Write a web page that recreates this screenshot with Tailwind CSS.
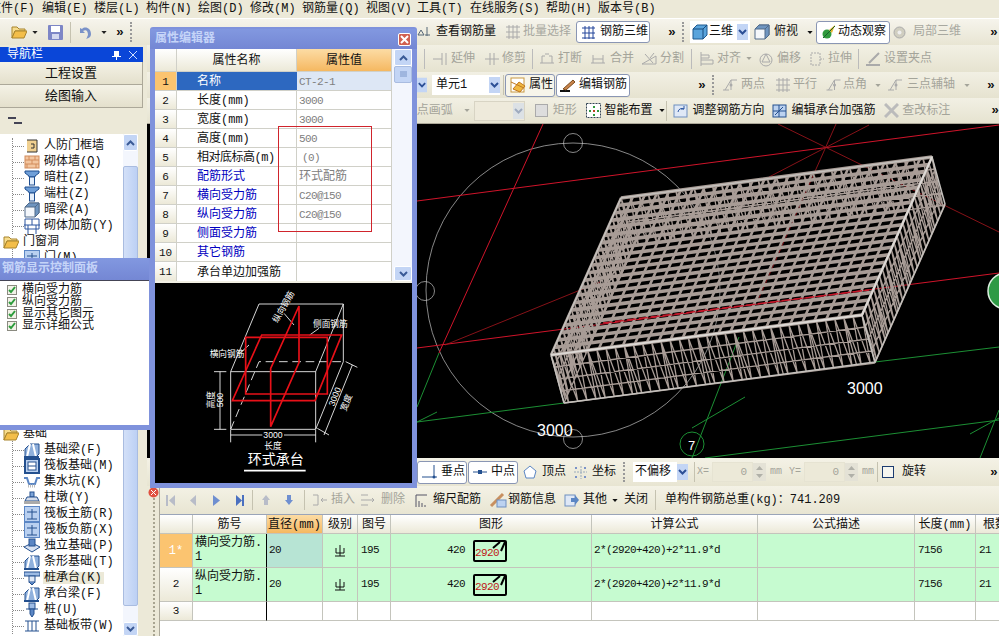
<!DOCTYPE html>
<html lang="zh">
<head>
<meta charset="UTF-8" />
<title>钢筋三维</title>
<script src="https://cdn.jsdelivr.net/npm/@tailwindcss/browser@4"></script>
</head>
<body class="bg-[#ece9d8]">

<svg class="absolute w-0 h-0">
  <symbol id="arr" viewBox="0 0 7 4"><path d="M0 0h7L3.500 4z" fill="currentColor"/></symbol>
  <symbol id="sel" viewBox="0 0 11 16"><rect width="11" height="16" fill="#c3d5f5"/><path d="M2 6l3.500 3.500L9 6" fill="none" stroke="#2c4f96" stroke-width="2"/></symbol>
  <symbol id="col" viewBox="0 0 16 16"><path d="M1 1h14v2l-4 3v1H5V6L1 3z" fill="#6f9fd8" stroke="#1f4e90"/><rect x="5.500" y="7" width="5" height="8" fill="#e4eefa" stroke="#1f4e90"/></symbol>
  <symbol id="bm" viewBox="0 0 16 16"><path d="M1 15V7l5-5h9v10l-3 3z" fill="#8fb0dc" stroke="#24508f"/><path d="M6 2L3 15M9 2l3 13" stroke="#fff" stroke-width="2"/><path d="M0 15h15" stroke="#24508f" stroke-width="2"/></symbol>
  <symbol id="sq" viewBox="0 0 16 16"><rect x=".5" y=".5" width="15" height="15" fill="#b9d0f0" stroke="#5b86c4"/><path d="M8 3v10M3 6h10M3 13h10" stroke="#25508f" fill="none"/></symbol>
  <symbol id="fold" viewBox="0 0 16 14"><path d="M1 2h5l2 2h6v2H4L1 13z" fill="#f7dc8c" stroke="#a8842c"/><path d="M4 6h12l-3 7H1z" fill="#f3be4a" stroke="#a8842c"/></symbol>
  <symbol id="cube" viewBox="0 0 16 16"><path d="M1 5l4-4h10v10l-4 4H1z" fill="#5aa4dc" stroke="#1f5a90"/><path d="M1 5h10v10M11 5l4-4" fill="none" stroke="#174a7c"/></symbol>
  <symbol id="cube2" viewBox="0 0 16 16"><path d="M1 5l4-4h10v10l-4 4H1z" fill="#f4f7fb" stroke="#506a8a"/><path d="M1 5l4-4h10l-4 4zM11 5l4-4v10l-4 4z" fill="#6f95c0" stroke="#506a8a"/></symbol>
  <symbol id="gr" viewBox="0 0 16 16"><path d="M1 3h14M1 8h14M1 13h14M4 1v14M8 1v14M12 1v14" stroke="#aaa" fill="none"/></symbol>
  <symbol id="ln" viewBox="0 0 16 16"><path d="M1 13h6M9 3l-6 10M9 3h6M9 3v10" stroke="#aaa" fill="none"/><circle cx="9" cy="8" r="1.500" fill="#aaa"/></symbol>
</svg>

<div class="w-[999px] h-[636px] overflow-hidden relative flex flex-col text-[12px] leading-none text-[#111] font-['Liberation_Mono','Noto_Sans_CJK_SC',monospace]">

  <!-- menu -->
  <div class="h-[18px] flex items-center bg-[#ece9d8] whitespace-nowrap">
    <span class="w-[42px] -ml-[11px] pl-0">文件(F)</span>
    <span class="w-[63px] ml-[11px]">编辑(E)</span>
    <span class="w-[52px] -ml-[11px]">楼层(L)</span>
    <span class="w-[52px]">构件(N)</span>
    <span class="w-[52px]">绘图(D)</span>
    <span class="w-[52px]">修改(M)</span>
    <span class="w-[64px]">钢筋量(Q)</span>
    <span class="w-[51px]">视图(V)</span>
    <span class="w-[53px]">工具(T)</span>
    <span class="w-[76px]">在线服务(S)</span>
    <span class="w-[52px]">帮助(H)</span>
    <span>版本号(B)</span>
  </div>

  <!-- first toolbar, full width -->
  <div class="h-[27px] flex items-center whitespace-nowrap bg-linear-to-b from-[#f6f4ec] to-[#e8e5d3] border-t border-[#fff]">
    <span class="w-[11px]"></span>
    <span class="w-[37px] flex items-center gap-[5px]"><svg class="w-4 h-[14px]"><use href="#fold"/></svg><svg class="w-[6px] h-[3px] text-[#222]"><use href="#arr"/></svg></span>
    <span class="w-[22px]"><svg class="w-[15px] h-[15px]" viewBox="0 0 15 15"><rect width="15" height="15" rx="1" fill="#7d86c6"/><rect x="3" y="1" width="9" height="6" fill="#fff"/><rect x="4" y="9" width="7" height="5" fill="#d4d8ee"/></svg></span>
    <span class="w-[8px] h-[21px] border-l border-[#c5c2b0]"></span>
    <span class="w-[38px] flex items-center gap-[10px]"><svg class="w-[13px] h-[13px]" viewBox="0 0 13 13"><path d="M2 2v5h5L5 5c3-2 5 0 5 4-1 2-1 3-2 4 4-1 5-3 5-5 0-6-6-8-9-5z" fill="#7a92c8"/></svg><svg class="w-[6px] h-[3px] text-[#222]"><use href="#arr"/></svg></span>
    <span class="w-[14px] font-bold text-[13px]">»</span>
    <span class="w-[10px] h-[20px] border-l-2 border-dotted border-[#999]"></span>
    <span class="w-[277px]"></span>
    <span class="w-[88px] flex items-center gap-[3px]"><svg class="w-4 h-4" viewBox="0 0 16 16"><path d="M1 11l3-5 3 5zM10 3v9M8 11h5" stroke="#567" fill="none"/></svg>查看钢筋量</span>
    <span class="w-[71px] flex items-center gap-[2px] text-[#a8a8a0]"><svg class="w-4 h-4"><use href="#gr"/></svg>批量选择</span>
    <span class="w-[74px] h-[22px] flex items-center gap-[4px] pl-[4px] rounded-[3px] border border-[#8a96b4] bg-white"><svg class="w-[15px] h-[15px]" viewBox="0 0 15 15"><path d="M1 3h13M1 8h13M1 13h13M4 1v13M8 1v13M12 1v13" stroke="#23459a" fill="none"/></svg>钢筋三维</span>
    <span class="w-[18px]"></span>
    <span class="w-[14px] font-bold text-[13px]">»</span>
    <span class="w-[8px] h-[20px] border-l-2 border-dotted border-[#999]"></span>
    <span class="w-[60px] h-[22px] flex items-center bg-white pl-[2px]"><svg class="w-4 h-4 shrink-0"><use href="#cube"/></svg><span class="ml-[1px] w-[28px]">三维</span><svg class="w-[11px] h-4"><use href="#sel"/></svg></span>
    <span class="w-[66px] ml-[4px] -mr-[4px] flex items-center gap-[4px]"><svg class="w-4 h-4"><use href="#cube2"/></svg>俯视<svg class="w-[6px] h-[3px] ml-[5px]"><use href="#arr"/></svg></span>
    <span class="w-[74px] h-[23px] flex items-center gap-[1px] pl-[4px] rounded-[3px] border border-[#8a96b4] bg-white"><svg class="w-4 h-4 shrink-0" viewBox="0 0 16 16"><circle cx="6" cy="10" r="4.500" fill="#2f9a3c"/><path d="M8 6l6-5-3 8z" fill="#e4b22c"/><path d="M2 14L14 2" stroke="#16602a"/></svg>动态观察</span>
    <span class="w-[97px] ml-[3px] flex items-center gap-[7px] text-[#a8a8a0]"><svg class="w-[13px] h-[13px]" viewBox="0 0 13 13"><circle cx="6.500" cy="6.500" r="5.500" fill="#d0cec0" stroke="#aaa"/><circle cx="6.500" cy="6.500" r="2" fill="#eee"/></svg>局部三维</span>
    <span class="font-bold text-[13px]">»</span>
  </div>

  <div class="flex-1 flex min-h-0">
    <!-- navigation -->
    <div class="w-[147px] shrink-0 flex flex-col pt-[2px]">
      <div class="w-[143px] h-[15px] bg-[#0a46d8] text-white flex items-center whitespace-nowrap overflow-hidden">
        <span class="pl-[7px] w-[112px]">导航栏</span>
        <svg class="w-[9px] h-[10px]" viewBox="0 0 9 10"><path d="M2 1h5v5h2v1H5v3H4V7H0V6h2z" fill="#fff"/></svg>
        <svg class="ml-[8px] w-[8px] h-[8px]" viewBox="0 0 8 8"><path d="M0 0l8 8M8 0L0 8" stroke="#cfe0ff"/></svg>
      </div>
      <div class="w-[143px] h-[23px] flex items-center justify-center text-[13px] border-b border-[#aca899] border-r bg-linear-to-b from-[#f4f2e6] to-[#e4e0cc]">工程设置</div>
      <div class="w-[143px] h-[23px] flex items-center justify-center text-[13px] border-b border-[#aca899] border-r bg-linear-to-b from-[#f4f2e6] to-[#e4e0cc]">绘图输入</div>
      <div class="w-[143px] h-[26px] flex items-center pl-[8px] bg-[#ece9d8]"><svg class="w-[16px] h-[8px]" viewBox="0 0 16 8"><path d="M0 1h8M6 6h8" stroke="#445" stroke-width="2"/></svg></div>
      <div class="flex-1 flex min-h-0">
        <div class="w-[123px] bg-white pt-[4px] overflow-hidden whitespace-nowrap">
          <div class="ml-[12px] border-l border-dotted border-[#888]">
            <div class="flex items-center h-4"><i class="w-[11px] border-t border-dotted border-[#888]"></i><svg class="w-4 h-4" viewBox="0 0 16 16"><path d="M3 2h10v12H3M7 6h3v4H7" fill="#f0d090" stroke="#333"/></svg><span class="ml-[4px]">人防门框墙</span></div>
            <div class="flex items-center h-4"><i class="w-[11px] border-t border-dotted border-[#888]"></i><svg class="w-4 h-4" viewBox="0 0 16 16"><rect x="1" y="2" width="14" height="12" fill="#f3c6a0" stroke="#d28c5c"/><path d="M1 6h14M1 10h14M5 2v4M11 2v4M8 6v4M3 10v4M12 10v4" stroke="#d28c5c"/></svg><span class="ml-[4px]">砌体墙(Q)</span></div>
            <div class="flex items-center h-4"><i class="w-[11px] border-t border-dotted border-[#888]"></i><svg class="w-4 h-4"><use href="#col"/></svg><span class="ml-[4px]">暗柱(Z)</span></div>
            <div class="flex items-center h-4"><i class="w-[11px] border-t border-dotted border-[#888]"></i><svg class="w-4 h-4"><use href="#col"/></svg><span class="ml-[4px]">端柱(Z)</span></div>
            <div class="flex items-center h-4"><i class="w-[11px] border-t border-dotted border-[#888]"></i><svg class="w-4 h-4"><use href="#cube2"/></svg><span class="ml-[4px]">暗梁(A)</span></div>
            <div class="flex items-center h-4"><i class="w-[11px] border-t border-dotted border-[#888]"></i><svg class="w-4 h-4" viewBox="0 0 16 16"><path d="M1 1h14v10H1zM0 7h16M4 7v9M12 7v9M8 1v6" fill="none" stroke="#2c56a0"/></svg><span class="ml-[4px]">砌体加筋(Y)</span></div>
            <div class="flex items-center h-4 -ml-[10px]"><svg class="w-4 h-[14px] bg-white"><use href="#fold"/></svg><span class="ml-[4px]">门窗洞</span></div>
            <div class="flex items-center h-4"><i class="w-[11px] border-t border-dotted border-[#888]"></i><svg class="w-4 h-4"><use href="#sq"/></svg><span class="ml-[4px]">门(M)</span></div>
            <div class="h-[160px]"></div>
            <div class="flex items-center h-4 -ml-[10px]"><svg class="w-4 h-[14px] bg-white"><use href="#fold"/></svg><span class="ml-[4px]">基础</span></div>
            <div class="flex items-center h-4"><i class="w-[11px] border-t border-dotted border-[#888]"></i><svg class="w-4 h-4"><use href="#bm"/></svg><span class="ml-[4px]">基础梁(F)</span></div>
            <div class="flex items-center h-4"><i class="w-[11px] border-t border-dotted border-[#888]"></i><svg class="w-4 h-4" viewBox="0 0 16 16"><rect x="1" y="1" width="14" height="14" fill="#bcd2f0" stroke="#24508f" stroke-width="2"/><rect x="4" y="4" width="8" height="8" fill="#fff" stroke="#24508f"/><path d="M4 8h8" stroke="#24508f"/></svg><span class="ml-[4px]">筏板基础(M)</span></div>
            <div class="flex items-center h-4"><i class="w-[11px] border-t border-dotted border-[#888]"></i><svg class="w-4 h-4" viewBox="0 0 16 16"><path d="M0 4h3l2 6h6l2-6h3" fill="none" stroke="#5b86c4" stroke-width="2"/><path d="M4 12h8" stroke="#bbb" stroke-width="3" stroke-dasharray="1 1"/></svg><span class="ml-[4px]">集水坑(K)</span></div>
            <div class="flex items-center h-4"><i class="w-[11px] border-t border-dotted border-[#888]"></i><svg class="w-4 h-4" viewBox="0 0 16 16"><rect x="6" y="2" width="4" height="5" fill="#7da4d8" stroke="#24508f"/><path d="M3 7h10l2 4H1z" fill="#d4dcea" stroke="#24508f"/><rect x="0" y="11" width="16" height="3" fill="#aaa"/></svg><span class="ml-[4px]">柱墩(Y)</span></div>
            <div class="flex items-center h-4"><i class="w-[11px] border-t border-dotted border-[#888]"></i><svg class="w-4 h-4"><use href="#sq"/></svg><span class="ml-[4px]">筏板主筋(R)</span></div>
            <div class="flex items-center h-4"><i class="w-[11px] border-t border-dotted border-[#888]"></i><svg class="w-4 h-4"><use href="#sq"/></svg><span class="ml-[4px]">筏板负筋(X)</span></div>
            <div class="flex items-center h-4"><i class="w-[11px] border-t border-dotted border-[#888]"></i><svg class="w-4 h-4" viewBox="0 0 16 16"><path d="M0 9l8-4 8 4-8 5z" fill="#d8e2f2" stroke="#24508f"/><rect x="5" y="1" width="6" height="7" fill="#5b86c4" stroke="#24508f"/></svg><span class="ml-[4px]">独立基础(P)</span></div>
            <div class="flex items-center h-4"><i class="w-[11px] border-t border-dotted border-[#888]"></i><svg class="w-4 h-4"><use href="#bm"/></svg><span class="ml-[4px]">条形基础(T)</span></div>
            <div class="flex items-center h-4"><i class="w-[11px] border-t border-dotted border-[#888]"></i><svg class="w-4 h-4" viewBox="0 0 16 16"><rect x="0" y="2" width="16" height="4" fill="#9dbbe4" stroke="#24508f"/><rect x="5" y="6" width="6" height="6" fill="#dfe8f6" stroke="#24508f"/><path d="M5 12l3 3 3-3" fill="#5b86c4" stroke="#24508f"/></svg><span class="ml-[3px] px-[1px] bg-[#ece9d8] w-[61px]">桩承台(K)</span></div>
            <div class="flex items-center h-4"><i class="w-[11px] border-t border-dotted border-[#888]"></i><svg class="w-4 h-4"><use href="#bm"/></svg><span class="ml-[4px]">承台梁(F)</span></div>
            <div class="flex items-center h-4"><i class="w-[11px] border-t border-dotted border-[#888]"></i><svg class="w-4 h-4" viewBox="0 0 16 16"><rect x="5" y="1" width="6" height="6" fill="#9dbbe4" stroke="#24508f"/><path d="M2 7h12M6 7v5l2 3 2-3V7" fill="#5b86c4" stroke="#24508f"/></svg><span class="ml-[4px]">桩(U)</span></div>
            <div class="flex items-center h-4"><i class="w-[11px] border-t border-dotted border-[#888]"></i><svg class="w-4 h-4" viewBox="0 0 16 16"><path d="M1 3h14M4 3v10M8 3v10M12 3v10M1 13h14" stroke="#24508f" fill="none"/></svg><span class="ml-[4px]">基础板带(W)</span></div>
          </div>
        </div>
        <!-- tree scrollbar -->
        <div class="w-[15px] bg-[#f3f6fd] flex flex-col">
          <div class="h-[17px] bg-[#c3d5f5] flex items-center justify-center rounded-[2px] border border-white"><svg class="w-[9px] h-[6px]" viewBox="0 0 9 6"><path d="M1 5l3.500-3.500L8 5" fill="none" stroke="#3a5a96" stroke-width="2"/></svg></div>
          <div class="h-[440px] mt-[15px] bg-linear-to-r from-[#d3e0f8] to-[#bcd0f4] rounded-[2px] border border-[#a9bce0]"></div>
          <div class="flex-1"></div>
          <div class="h-[14px] bg-[#c3d5f5] flex items-center justify-center rounded-[2px] border border-white"><svg class="w-[9px] h-[6px]" viewBox="0 0 9 6"><path d="M1 1l3.500 3.500L8 1" fill="none" stroke="#3a5a96" stroke-width="2"/></svg></div>
        </div>
        <div class="w-[9px]"></div>
      </div>
    </div>

    <!-- right column -->
    <div class="flex-1 min-w-0 flex flex-col whitespace-nowrap">
      <!-- row 2 -->
      <div class="h-[27px] flex items-center text-[#a4a49a] bg-linear-to-b from-[#f2f0e4] to-[#e6e3d0]">
        <span class="w-[277px]"></span>
        <span class="w-[8px] h-[20px] border-l border-[#bbb]"></span>
        <span class="w-[52px] flex items-center gap-[3px]"><svg class="w-4 h-4" viewBox="0 0 16 16"><path d="M1 8h9M10 2v12M14 2v12" stroke="#aaa" fill="none"/></svg>延伸</span>
        <span class="w-[48px] flex items-center gap-[2px]"><svg class="w-4 h-4" viewBox="0 0 16 16"><path d="M1 8h14M6 2v12M10 2v12" stroke="#aaa" fill="none"/></svg>修剪</span>
        <span class="w-[7px] h-[20px] border-l border-[#bbb]"></span>
        <span class="w-[51px] flex items-center gap-[3px]"><svg class="w-4 h-4" viewBox="0 0 16 16"><path d="M1 12h14M3 12V5h3M13 12V5h-3M6 3h4" stroke="#aaa" fill="none"/></svg>打断</span>
        <span class="w-[51px] flex items-center gap-[4px]"><svg class="w-4 h-4" viewBox="0 0 16 16"><path d="M1 12h14M3 12V4M13 12V4M3 8h10" stroke="#aaa" fill="none"/></svg>合并</span>
        <span class="w-[50px] flex items-center gap-[3px]"><svg class="w-4 h-4" viewBox="0 0 16 16"><path d="M1 13h14V5zM4 3l8 9M13 2l-4 5" stroke="#aaa" fill="none"/></svg>分割</span>
        <span class="w-[9px] h-[20px] border-l border-[#bbb]"></span>
        <span class="w-[58px] flex items-center gap-[3px]"><svg class="w-[14px] h-4" viewBox="0 0 14 16"><path d="M1 1v14M1 4h8v3H1M1 9h12v4H1" stroke="#aaa" fill="none"/></svg>对齐<svg class="w-[6px] h-[3px] ml-[2px]"><use href="#arr"/></svg></span>
        <span class="w-[51px] flex items-center gap-[3px]"><svg class="w-4 h-4" viewBox="0 0 16 16"><circle cx="8" cy="9" r="6" fill="none" stroke="#aaa"/><path d="M8 3l4 8H4z" fill="none" stroke="#aaa"/></svg>偏移</span>
        <span class="w-[49px] flex items-center gap-[3px]"><svg class="w-4 h-4" viewBox="0 0 16 16"><path d="M2 2h9v12H2zM11 8h4" fill="none" stroke="#aaa" stroke-dasharray="2 1"/></svg>拉伸</span>
        <span class="w-[7px] h-[20px] border-l border-[#bbb]"></span>
        <span class="w-[73px] flex items-center gap-[3px]"><svg class="w-4 h-4" viewBox="0 0 16 16"><path d="M1 14h14M4 12L14 2" stroke="#aaa" stroke-width="2" fill="none"/></svg>设置夹点</span>
      </div>
      <!-- row 3 -->
      <div class="h-[26px] flex items-center bg-linear-to-b from-[#f2f0e4] to-[#e6e3d0]">
        <span class="w-[270px]"></span>
        <svg class="w-[10px] h-4"><use href="#sel"/></svg>
        <span class="w-[5px]"></span>
        <span class="w-[68px] h-[20px] flex items-center justify-between bg-white pl-[4px]">单元1<svg class="w-[11px] h-4"><use href="#sel"/></svg></span>
        <span class="w-[5px] h-[20px] border-l border-[#c5c2b0] ml-[3px] -mr-[3px]"></span>
        <span class="w-[50px] h-[23px] flex items-center gap-[3px] pl-[4px] rounded-[3px] border border-[#8a96b4] bg-[#f7f5ea]"><svg class="w-4 h-4 shrink-0" viewBox="0 0 16 16"><rect x="1" y="1" width="13" height="14" fill="#fff" stroke="#c89840"/><path d="M1 5l13 6M3 12l6-7 6 4-5 6z" fill="#f0b840" stroke="#c07820"/></svg>属性</span>
        <span class="w-[74px] h-[23px] flex items-center gap-[3px] pl-[3px] rounded-[3px] border border-[#8a96b4] bg-white ml-[1px]"><svg class="w-4 h-4 shrink-0" viewBox="0 0 16 16"><path d="M0 14h10" stroke="#111" stroke-width="2"/><path d="M3 12L13 3l2 2-9 8z" fill="#c8844c" stroke="#7c4c1c"/></svg>编辑钢筋</span>
        <span class="w-[68px]"></span>
        <span class="w-[14px] font-bold text-[13px]">»</span>
        <span class="w-[10px] h-[20px] border-l-2 border-dotted border-[#999]"></span>
        <span class="w-[53px] flex items-center gap-[3px] text-[#a4a49a]"><svg class="w-4 h-4"><use href="#ln"/></svg>两点</span>
        <span class="w-[50px] flex items-center gap-[2px] text-[#a4a49a]"><svg class="w-4 h-4"><use href="#gr"/></svg>平行</span>
        <span class="w-[62px] flex items-center gap-[1px] text-[#a4a49a]"><svg class="w-[17px] h-4"><use href="#ln"/></svg>点角<svg class="w-[6px] h-[3px] ml-[7px]"><use href="#arr"/></svg></span>
        <span class="w-[100px] flex items-center gap-[4px] text-[#a4a49a]"><svg class="w-4 h-4"><use href="#ln"/></svg>三点辅轴<svg class="w-[6px] h-[3px] ml-[5px]"><use href="#arr"/></svg></span>
        <span class="font-bold text-[13px]">»</span>
      </div>
      <!-- row 4 -->
      <div class="h-[26px] flex items-center border-b border-[#aca899] bg-linear-to-b from-[#f2f0e4] to-[#e6e3d0]">
        <span class="w-[270px]"></span>
        <span class="w-[57px] flex items-center text-[#a4a49a]"><span class="w-[37px]">点画弧</span><svg class="w-[6px] h-[3px] ml-[10px]"><use href="#arr"/></svg></span>
        <span class="w-[51px] h-[20px] bg-[#eeeadb] border border-[#d8d4c4] flex justify-end"><svg class="w-[11px] h-[18px] opacity-40"><use href="#sel"/></svg></span>
        <span class="w-[10px]"></span>
        <span class="w-[51px] flex items-center gap-[5px] text-[#a4a49a]"><svg class="w-[13px] h-[13px]" viewBox="0 0 13 13"><rect x=".5" y=".5" width="12" height="12" fill="#ddd" stroke="#aaa"/></svg>矩形</span>
        <span class="w-[80px] flex items-center gap-[4px]"><svg class="w-[15px] h-[15px] shrink-0" viewBox="0 0 15 15"><rect x=".5" y=".5" width="14" height="14" fill="#fff" stroke="#345" stroke-dasharray="2 1"/><path d="M7 3h2v2H7zM3 7h2v2H3zM11 7h2v2h-2zM7 11h2v2H7z" fill="#2f9a3c"/><path d="M7 7h2v2H7z" fill="#c04020"/></svg>智能布置<svg class="w-[6px] h-[3px] ml-[2px]"><use href="#arr"/></svg></span>
        <span class="w-[7px] h-[20px] border-l border-[#c5c2b0]"></span>
        <span class="w-[100px] flex items-center gap-[5px]"><svg class="w-[15px] h-[15px]" viewBox="0 0 15 15"><rect x="1" y="2" width="13" height="12" fill="#dfe8f6" stroke="#6f8fc0"/><path d="M5 9a4 4 0 0 1 6-3M11 3v3H8" fill="none" stroke="#2c56a0"/></svg>调整钢筋方向</span>
        <span class="w-[112px] flex items-center gap-[4px]"><svg class="w-[15px] h-[15px]" viewBox="0 0 15 15"><rect x="1" y="2" width="13" height="12" fill="#bcd2f0" stroke="#24508f"/><path d="M7 2v12M1 8h13M3 12l8-8" fill="none" stroke="#24508f"/></svg>编辑承台加强筋</span>
        <span class="w-[107px] flex items-center gap-[3px] text-[#a4a49a]"><svg class="w-[15px] h-[15px]" viewBox="0 0 15 15"><path d="M1 1l13 13M14 1L1 14" stroke="#bbb" stroke-width="3"/></svg>查改标注</span>
        <span class="font-bold text-[13px]">»</span>
      </div>

      <!-- 3D view -->
      <div class="h-[334px] bg-black overflow-hidden">
        <svg class="block" width="852" height="334" viewBox="147 124 852 334" fill="none">
          <g stroke="#c2c2c2" stroke-width=".7">
            <circle cx="573" cy="290" r="147"/><circle cx="573" cy="143" r="9.500"/><circle cx="425" cy="291" r="9.500"/><circle cx="573" cy="439" r="9.500"/>
          </g>
          <g stroke="#d0142a" stroke-width="1">
            <path d="M417 201L999 125M417 348L999 273M543 124L439 353"/>
          </g>
          <g stroke="#a8161e" stroke-width=".8">
            <path d="M445 345L600 282M769 177L869 125M778 124L999 232M836 124L758 300"/>
          </g>
          <g stroke="#1c8f34" stroke-width="1">
            <path d="M439 353L417 407M417 422L564 403M875 362L999 347M705 458L999 420M739 337L692 458M417 422L437 412M692 428L745 397M970 434L999 418M980 458L999 410"/>
            <circle cx="692" cy="444" r="12"/>
          </g>
          <path id="cageMesh" stroke="#a89c96" stroke-width="1.300"/>
          <path id="cageRows" stroke="#a89c96" stroke-width="3.600"/>
          <path id="cageCols" stroke="#a89c96" stroke-width="2.600"/>
          <path d="M551 355L621 198L932 157L862 315M564 403L875 362L945 204L932 157M551 355L564 403M875 362L862 315" stroke="#c4c0bc" stroke-width="1.500"/>
          <path d="M551 355L862 315L932 157" stroke="#dcd8d4" stroke-width="2"/>
          <path d="M603 323L869 290" stroke="#c4182a" stroke-width="1.500" stroke-dasharray="9 3"/>
          <g fill="#fff" font-family="Liberation Sans" font-size="16">
            <text x="847" y="394">3000</text>
            <text x="537" y="436">3000</text>
            <text x="688" y="450" font-size="13">7</text>
          </g>
          <circle cx="1006" cy="291" r="18" fill="#2e9a45" stroke="#dcefe0" stroke-width="1.500"/>
        </svg>
      </div>

      <!-- snap bar -->
      <div class="h-[28px] flex items-center bg-linear-to-b from-[#f4f2e6] to-[#e8e5d2]">
        <span class="w-[270px]"></span>
        <span class="w-[50px] h-[23px] flex items-center gap-[3px] pl-[4px] rounded-[3px] border border-[#8a96b4] bg-white"><svg class="w-4 h-4 shrink-0" viewBox="0 0 16 16"><path d="M0 13h15M12 1v12" stroke="#24508f"/><circle cx="12" cy="13" r="1.500" fill="#24508f"/></svg>垂点</span>
        <span class="w-[50px] h-[23px] flex items-center gap-[3px] pl-[3px] ml-[1px] rounded-[3px] border border-[#8a96b4] bg-white"><svg class="w-4 h-4 shrink-0" viewBox="0 0 16 16"><path d="M1 8h14" stroke="#24508f"/><rect x="6" y="6" width="4" height="4" fill="#24508f"/></svg>中点</span>
        <span class="w-[50px] ml-[5px] flex items-center gap-[5px]"><svg class="w-[14px] h-[14px] shrink-0" viewBox="0 0 14 14"><path d="M7 1l6 5-2 7H3L1 6z" fill="#fff" stroke="#5b86c4"/></svg>顶点</span>
        <span class="w-[50px] flex items-center gap-[4px]"><svg class="w-[15px] h-[15px] shrink-0" viewBox="0 0 15 15"><path d="M1 7h13M8 1v13" stroke="#9ab" stroke-dasharray="2 1"/><path d="M2 2h2v2H2zM11 2h2v2h-2zM2 11h2v2H2zM11 11h2v2h-2z" fill="#7a92c8"/></svg>坐标</span>
        <span class="w-[10px] h-[20px] border-l-2 border-dotted border-[#999]"></span>
        <span class="w-[44px] h-[20px] flex items-center bg-white pl-[2px]">不偏移</span>
        <svg class="w-[11px] h-4"><use href="#sel"/></svg>
        <span class="w-[6px]"></span>
        <span class="w-[3px] h-[20px] border-l border-[#c5c2b0]"></span>
        <span class="w-[15px] text-[#a4a49a] text-[10px]">X=</span>
        <span class="w-[41px] h-[20px] bg-[#ece9d8] border border-[#e6e3d2] text-[#a4a49a] flex items-center justify-end pr-[5px] text-[11px]">0</span>
        <svg class="w-[14px] h-[18px]" viewBox="0 0 14 18"><rect width="13" height="18" fill="#e4e2d6"/><path d="M3 7l3.500-4L10 7zM3 11l3.500 4L10 11z" fill="#b0b0a8"/></svg>
        <span class="w-[22px] text-[#a4a49a] text-[10px] pl-[3px]">mm</span>
        <span class="w-[15px] text-[#a4a49a] text-[10px]">Y=</span>
        <span class="w-[41px] h-[20px] bg-[#ece9d8] border border-[#e6e3d2] text-[#a4a49a] flex items-center justify-end pr-[5px] text-[11px]">0</span>
        <svg class="w-[14px] h-[18px]" viewBox="0 0 14 18"><rect width="13" height="18" fill="#e4e2d6"/><path d="M3 7l3.500-4L10 7zM3 11l3.500 4L10 11z" fill="#b0b0a8"/></svg>
        <span class="w-[18px] text-[#a4a49a] text-[10px] pl-[3px]">mm</span>
        <span class="w-[5px] h-[20px] border-l border-[#c5c2b0]"></span>
        <span class="w-[12px] h-[12px] border border-[#1c3c70] bg-[#f6f6f0]"></span>
        <span class="ml-[8px] w-[88px]">旋转</span>
        <span class="font-bold text-[13px]">»</span>
      </div>

      <!-- bottom -->
      <div class="flex-1 min-h-0 flex">
        <div class="w-[13px] relative border-r border-[#aca899] bg-[#ece9d8]">
          <span class="block w-[1px] h-full ml-[6px] border-l-2 border-dotted border-[#a8a490]"></span>
          <svg class="absolute left-[1px] top-[1px] w-[11px] h-[11px]" viewBox="0 0 11 11"><circle cx="5.500" cy="5.500" r="5" fill="#e05040"/><path d="M3 3l5 5M8 3l-5 5" stroke="#fff"/></svg>
        </div>
        <div class="flex-1 min-w-0 flex flex-col bg-white">
          <div class="h-[28px] flex items-center bg-linear-to-b from-[#f4f2e6] to-[#e8e5d2]">
            <span class="w-[5px]"></span>
            <svg class="w-[23px] h-[11px]" viewBox="0 0 23 11"><path d="M1 0h2v11H1zM10 0v11L4 5.500z" fill="#b8bcc8"/></svg>
            <svg class="w-[23px] h-[11px] ml-[1px]" viewBox="0 0 23 11"><path d="M7 0v11L1 5.500z" fill="#b8bcc8"/></svg>
            <svg class="w-[23px] h-[11px]" viewBox="0 0 23 11"><path d="M1 0v11l7-5.500z" fill="#6f8fd0"/></svg>
            <svg class="w-[17px] h-[11px]" viewBox="0 0 17 11"><path d="M1 0v11l6-5.500zM7 0h2v11H7z" fill="#4a70c0"/></svg>
            <span class="w-[10px] h-[20px] border-l border-[#c5c2b0]"></span>
            <svg class="w-[23px] h-[10px]" viewBox="0 0 23 10"><path d="M4 0l4 5H6v5H2V5H0z" fill="#b8bcc8"/></svg>
            <svg class="w-[19px] h-[10px]" viewBox="0 0 19 10"><path d="M2 0h4v5h2l-4 5-4-5h2z" fill="#6f8fd0"/></svg>
            <span class="w-[8px] h-[20px] border-l border-[#c5c2b0]"></span>
            <span class="w-[48px] flex items-center gap-[3px] text-[#a4a49a]"><svg class="w-4 h-4 shrink-0" viewBox="0 0 16 16"><path d="M1 3h5v10H1M9 8h6M11 6l-2 2 2 2" stroke="#aaa" fill="none"/></svg>插入</span>
            <span class="w-[55px] flex items-center gap-[5px] text-[#a4a49a]"><svg class="w-4 h-4 shrink-0" viewBox="0 0 16 16"><path d="M1 3h7M1 8h13M1 13h7M12 6l2 2-2 2" stroke="#aaa" fill="none"/></svg>删除</span>
            <span class="w-[74px] flex items-center gap-[5px]"><svg class="w-[13px] h-[13px] shrink-0" viewBox="0 0 13 13"><path d="M1 13V1h11M4 13V7M7 13V9M10 13v-2" stroke="#556" fill="none"/></svg>缩尺配筋</span>
            <span class="w-[75px] flex items-center gap-[1px]"><svg class="w-[18px] h-4 shrink-0" viewBox="0 0 18 16"><path d="M2 14L14 2" stroke="#c89060" stroke-width="3"/><rect x="8" y="8" width="9" height="7" fill="#bcd2f0" stroke="#6f8fc0"/></svg>钢筋信息</span>
            <span class="w-[60px] flex items-center gap-[4px]"><svg class="w-[15px] h-[15px] shrink-0" viewBox="0 0 15 15"><rect x="1" y="2" width="10" height="11" fill="#dfe8f6" stroke="#6f8fc0"/><path d="M7 5h4V2l4 5-4 5V9H7z" fill="#5b86c4"/></svg>其他<svg class="w-[6px] h-[3px] ml-[1px]"><use href="#arr"/></svg></span>
            <span class="w-[31px]">关闭</span>
            <span class="w-[10px] h-[20px] border-l border-[#c5c2b0]"></span>
            <span>单构件钢筋总重(kg)：741.209</span>
          </div>
          <!-- rebar table -->
          <div class="grid grid-cols-[33px_74px_56px_35px_33px_201px_166px_157px_61px_60px] grid-rows-[19px_34px_34px_19px] w-[876px] border-t border-[#9aa4b8]">
            <div class="border-r border-b border-[#c4c4bc] bg-linear-to-b from-white to-[#ece9d8]"></div>
            <div class="border-r border-b border-[#c4c4bc] bg-linear-to-b from-white to-[#ece9d8] flex items-center justify-center pt-[1px]">筋号</div>
            <div class="border-r border-b border-[#c4c4bc] bg-linear-to-b from-[#fcdca4] to-[#f5b860] flex items-center justify-center pt-[1px]">直径(mm)</div>
            <div class="border-r border-b border-[#c4c4bc] bg-linear-to-b from-white to-[#ece9d8] flex items-center justify-center pt-[1px]">级别</div>
            <div class="border-r border-b border-[#c4c4bc] bg-linear-to-b from-white to-[#ece9d8] flex items-center justify-center pt-[1px]">图号</div>
            <div class="border-r border-b border-[#c4c4bc] bg-linear-to-b from-white to-[#ece9d8] flex items-center justify-center pt-[1px]">图形</div>
            <div class="border-r border-b border-[#c4c4bc] bg-linear-to-b from-white to-[#ece9d8] flex items-center justify-center pt-[1px]">计算公式</div>
            <div class="border-r border-b border-[#c4c4bc] bg-linear-to-b from-white to-[#ece9d8] flex items-center justify-center pt-[1px]">公式描述</div>
            <div class="border-r border-b border-[#c4c4bc] bg-linear-to-b from-white to-[#ece9d8] flex items-center justify-center pt-[1px]">长度(mm)</div>
            <div class="border-r border-b border-[#c4c4bc] bg-linear-to-b from-white to-[#ece9d8] flex items-center pl-[7px] pt-[1px] overflow-hidden">根数</div>

            <div class="border-r border-b border-[#c4c4bc] bg-[#fbc470] text-white flex items-center justify-center">1*</div>
            <div class="border-r border-b border-r-black border-b-[#c4c4bc] bg-[#c6fbd0] px-[2px] pt-[2px] leading-[14px] whitespace-normal break-all">横向受力筋.1</div>
            <div class="border-r border-b border-[#c4c4bc] bg-[#b7e4d4] flex items-center pl-[2px] text-[11px] tracking-[-0.6px]">20</div>
            <div class="border-r border-b border-[#c4c4bc] bg-[#c6fbd0] flex items-center justify-center"><svg class="w-[10px] h-[12px]" viewBox="0 0 10 12"><path d="M5 0v11M1 3v5h8V3M0 11h10" fill="none" stroke="#111"/></svg></div>
            <div class="border-r border-b border-[#c4c4bc] bg-[#c6fbd0] flex items-center pl-[3px] text-[11px] tracking-[-0.6px]">195</div>
            <div class="border-r border-b border-[#c4c4bc] bg-[#c6fbd0] flex items-center pl-[56px] text-[11px] tracking-[-0.6px]"><span class="w-[26px]">420</span><span class="relative w-[34px] h-[22px] rounded-[2px] border-2 border-black"><svg class="absolute -right-[1px] -top-[1px] w-[14px] h-[14px]" viewBox="0 0 14 14"><path d="M1 7L8 1M13 1L9 10" stroke="#000" stroke-width="2" fill="none"/></svg><span class="absolute left-[0px] bottom-[1px] text-[#c01818]">2920</span></span></div>
            <div class="border-r border-b border-[#c4c4bc] bg-[#c6fbd0] flex items-center pl-[2px] text-[11px] tracking-[-0.6px]">2*(2920+420)+2*11.9*d</div>
            <div class="border-r border-b border-[#c4c4bc] bg-[#c6fbd0]"></div>
            <div class="border-r border-b border-[#c4c4bc] bg-[#c6fbd0] flex items-center pl-[3px] text-[11px] tracking-[-0.6px]">7156</div>
            <div class="border-r border-b border-[#c4c4bc] bg-[#c6fbd0] flex items-center pl-[3px] text-[11px] tracking-[-0.6px]">21</div>

            <div class="border-r border-b border-[#c4c4bc] bg-linear-to-b from-white to-[#ece9d8] flex items-center justify-center text-[11px]">2</div>
            <div class="border-r border-b border-r-black border-b-[#c4c4bc] bg-[#c6fbd0] px-[2px] pt-[2px] leading-[14px] whitespace-normal break-all">纵向受力筋.1</div>
            <div class="border-r border-b border-[#c4c4bc] bg-[#c6fbd0] flex items-center pl-[2px] text-[11px] tracking-[-0.6px]">20</div>
            <div class="border-r border-b border-[#c4c4bc] bg-[#c6fbd0] flex items-center justify-center"><svg class="w-[10px] h-[12px]" viewBox="0 0 10 12"><path d="M5 0v11M1 3v5h8V3M0 11h10" fill="none" stroke="#111"/></svg></div>
            <div class="border-r border-b border-[#c4c4bc] bg-[#c6fbd0] flex items-center pl-[3px] text-[11px] tracking-[-0.6px]">195</div>
            <div class="border-r border-b border-[#c4c4bc] bg-[#c6fbd0] flex items-center pl-[56px] text-[11px] tracking-[-0.6px]"><span class="w-[26px]">420</span><span class="relative w-[34px] h-[22px] rounded-[2px] border-2 border-black"><svg class="absolute -right-[1px] -top-[1px] w-[14px] h-[14px]" viewBox="0 0 14 14"><path d="M1 7L8 1M13 1L9 10" stroke="#000" stroke-width="2" fill="none"/></svg><span class="absolute left-[0px] bottom-[1px] text-[#c01818]">2920</span></span></div>
            <div class="border-r border-b border-[#c4c4bc] bg-[#c6fbd0] flex items-center pl-[2px] text-[11px] tracking-[-0.6px]">2*(2920+420)+2*11.9*d</div>
            <div class="border-r border-b border-[#c4c4bc] bg-[#c6fbd0]"></div>
            <div class="border-r border-b border-[#c4c4bc] bg-[#c6fbd0] flex items-center pl-[3px] text-[11px] tracking-[-0.6px]">7156</div>
            <div class="border-r border-b border-[#c4c4bc] bg-[#c6fbd0] flex items-center pl-[3px] text-[11px] tracking-[-0.6px]">21</div>

            <div class="border-r border-b border-[#c4c4bc] bg-linear-to-b from-white to-[#ece9d8] flex items-center justify-center text-[11px]">3</div>
            <div class="border-r border-b border-r-black border-b-[#c4c4bc]"></div>
            <div class="border-r border-b border-[#c4c4bc]"></div>
            <div class="border-r border-b border-[#c4c4bc]"></div>
            <div class="border-r border-b border-[#c4c4bc]"></div>
            <div class="border-r border-b border-[#c4c4bc]"></div>
            <div class="border-r border-b border-[#c4c4bc]"></div>
            <div class="border-r border-b border-[#c4c4bc]"></div>
            <div class="border-r border-b border-[#c4c4bc]"></div>
            <div class="border-r border-b border-[#c4c4bc]"></div>
          </div>
        </div>
      </div>
    </div>
  </div>

  <!-- property editor dialog -->
  <div class="absolute left-[150px] top-[27px] w-[267px] h-[461px] flex flex-col border-x-[5px] border-b-[5px] border-t-[2px] border-[#7f92dc] bg-[#f2f0e4] rounded-t-[3px]">
    <div class="h-[20px] shrink-0 -mx-[5px] px-[5px] flex items-center justify-between bg-linear-to-b from-[#8298e0] to-[#7487d4]">
      <span class="font-bold text-[#c5d4f8]">属性编辑器</span>
      <span class="w-[13px] h-[13px] flex items-center justify-center rounded-[2px] bg-[#d06050] border border-white mr-[1px]"><svg class="w-[9px] h-[9px]" viewBox="0 0 9 9"><path d="M1 1l7 7M8 1L1 8" stroke="#fff" stroke-width="2"/></svg></span>
    </div>
    <div class="flex h-[232px] shrink-0 bg-white">
      <div class="w-[237px] grid grid-cols-[22px_120px_95px] grid-rows-[23px_repeat(11,19px)] [&>div]:pt-[2px]">
        <div class="border-r border-b border-[#d0d0c8] bg-linear-to-b from-white to-[#ece9d8]"></div>
        <div class="border-r border-b border-[#d0d0c8] bg-linear-to-b from-white to-[#ece9d8] flex items-center justify-center">属性名称</div>
        <div class="border-r border-b border-[#d0d0c8] bg-linear-to-b from-[#fcdca4] to-[#f5b860] flex items-center justify-center">属性值</div>

        <div class="border-r border-b border-[#d0d0c8] bg-[#fbc470] flex items-center justify-center text-[11px]">1</div>
        <div class="bg-[#2d68c0] text-white flex items-center pl-[20px] border-b border-[#d0d0c8]">名称</div>
        <div class="bg-[#dde7f5] text-[#808080] flex items-center pl-[2px] text-[11px] tracking-[-0.6px] border-b border-r border-[#d0d0c8]">CT-2-1</div>

        <div class="border-r border-b border-[#d0d0c8] bg-linear-to-b from-white to-[#ece9d8] flex items-center justify-center text-[11px]">2</div>
        <div class="border-r border-b border-[#d0d0c8] flex items-center pl-[20px]">长度(mm)</div>
        <div class="border-r border-b border-[#d0d0c8] flex items-center pl-[2px] text-[11px] tracking-[-0.6px] text-[#808080]">3000</div>

        <div class="border-r border-b border-[#d0d0c8] bg-linear-to-b from-white to-[#ece9d8] flex items-center justify-center text-[11px]">3</div>
        <div class="border-r border-b border-[#d0d0c8] flex items-center pl-[20px]">宽度(mm)</div>
        <div class="border-r border-b border-[#d0d0c8] flex items-center pl-[2px] text-[11px] tracking-[-0.6px] text-[#808080]">3000</div>

        <div class="border-r border-b border-[#d0d0c8] bg-linear-to-b from-white to-[#ece9d8] flex items-center justify-center text-[11px]">4</div>
        <div class="border-r border-b border-[#d0d0c8] flex items-center pl-[20px]">高度(mm)</div>
        <div class="border-r border-b border-[#d0d0c8] flex items-center pl-[2px] text-[11px] tracking-[-0.6px] text-[#808080]">500</div>

        <div class="border-r border-b border-[#d0d0c8] bg-linear-to-b from-white to-[#ece9d8] flex items-center justify-center text-[11px]">5</div>
        <div class="border-r border-b border-[#d0d0c8] flex items-center pl-[20px] tracking-[-0.5px]">相对底标高(m)</div>
        <div class="border-r border-b border-[#d0d0c8] flex items-center pl-[5px] text-[11px] tracking-[-0.6px] text-[#808080]">(0)</div>

        <div class="border-r border-b border-[#d0d0c8] bg-linear-to-b from-white to-[#ece9d8] flex items-center justify-center text-[11px]">6</div>
        <div class="border-r border-b border-[#d0d0c8] flex items-center pl-[20px] text-[#0000c0]">配筋形式</div>
        <div class="border-r border-b border-[#d0d0c8] flex items-center pl-[2px] text-[#808080]">环式配筋</div>

        <div class="border-r border-b border-[#d0d0c8] bg-linear-to-b from-white to-[#ece9d8] flex items-center justify-center text-[11px]">7</div>
        <div class="border-r border-b border-[#d0d0c8] flex items-center pl-[20px] text-[#0000c0]">横向受力筋</div>
        <div class="border-r border-b border-[#d0d0c8] flex items-center pl-[2px] text-[11px] tracking-[-0.6px] text-[#808080]">C20@150</div>

        <div class="border-r border-b border-[#d0d0c8] bg-linear-to-b from-white to-[#ece9d8] flex items-center justify-center text-[11px]">8</div>
        <div class="border-r border-b border-[#d0d0c8] flex items-center pl-[20px] text-[#0000c0]">纵向受力筋</div>
        <div class="border-r border-b border-[#d0d0c8] flex items-center pl-[2px] text-[11px] tracking-[-0.6px] text-[#808080]">C20@150</div>

        <div class="border-r border-b border-[#d0d0c8] bg-linear-to-b from-white to-[#ece9d8] flex items-center justify-center text-[11px]">9</div>
        <div class="border-r border-b border-[#d0d0c8] flex items-center pl-[20px] text-[#0000c0]">侧面受力筋</div>
        <div class="border-r border-b border-[#d0d0c8]"></div>

        <div class="border-r border-b border-[#d0d0c8] bg-linear-to-b from-white to-[#ece9d8] flex items-center justify-center text-[11px]">10</div>
        <div class="border-r border-b border-[#d0d0c8] flex items-center pl-[20px] text-[#0000c0]">其它钢筋</div>
        <div class="border-r border-b border-[#d0d0c8]"></div>

        <div class="border-r border-[#d0d0c8] bg-linear-to-b from-white to-[#ece9d8] flex items-center justify-center text-[11px]">11</div>
        <div class="border-r border-[#d0d0c8] flex items-center pl-[20px]">承台单边加强筋</div>
        <div class="border-r border-[#d0d0c8]"></div>
      </div>
      <div class="w-[20px] bg-[#f3f6fd] flex flex-col pl-[2px]">
        <div class="h-[17px] bg-[#c3d5f5] flex items-center justify-center rounded-[2px] border border-white"><svg class="w-[9px] h-[6px]" viewBox="0 0 9 6"><path d="M1 5l3.500-3.500L8 5" fill="none" stroke="#3a5a96" stroke-width="2"/></svg></div>
        <div class="h-[17px] bg-[#c3d5f5] rounded-[2px] border border-[#a9bce0] flex items-center justify-center"><svg class="w-[7px] h-[7px]" viewBox="0 0 7 7"><path d="M0 1h7M0 3h7M0 5h7" stroke="#7b96c8"/></svg></div>
        <div class="flex-1"></div>
        <div class="h-[15px] bg-[#c3d5f5] flex items-center justify-center rounded-[2px] border border-white"><svg class="w-[9px] h-[6px]" viewBox="0 0 9 6"><path d="M1 1l3.500 3.500L8 1" fill="none" stroke="#3a5a96" stroke-width="2"/></svg></div>
      </div>
    </div>
    <div class="h-[2px] shrink-0"></div>
    <div class="flex-1 bg-black min-h-0 overflow-hidden">
      <svg class="block" width="257" height="200" viewBox="18 9 771 600" fill="none">
        <g stroke="#fff" stroke-width="2.500">
          <path d="M245 275H500V448H245ZM330 72H583V245M245 275L330 72M500 275L583 72M500 448L583 245"/>
          <path d="M245 448L330 245H583" stroke-dasharray="26 14"/>
          <path d="M195 275H232M195 448H232M213 275V448M245 465H340M405 465H500M245 450V487M500 450V487M525 465L610 255M505 445L540 465M590 245L625 262M435 135L405 100M482 165L510 145M270 222L300 195"/>
        </g>
        <g stroke="#e81018" stroke-width="5">
          <path d="M290 172H535V342H290Z"/>
          <path d="M250 362H498L578 165H338Z"/>
          <path d="M450 78V248L365 440V265Z"/>
        </g>
        <g fill="#fff" font-size="30" font-family="Noto Sans CJK SC">
          <text transform="translate(385 130) rotate(-60)" font-size="26">纵向钢筋</text>
          <text x="492" y="142" font-size="26">侧面钢筋</text>
          <text x="182" y="232" font-size="26">横向钢筋</text>
          <text x="343" y="473" font-size="26" font-family="Liberation Sans">3000</text>
          <text x="346" y="508" font-size="26">长度</text>
          <text transform="translate(196 385) rotate(-90)" font-size="26">高度</text>
          <text transform="translate(222 382) rotate(-90)" font-size="26" font-family="Liberation Sans">500</text>
          <text transform="translate(555 380) rotate(-68)" font-size="26" font-family="Liberation Sans">3000</text>
          <text transform="translate(590 395) rotate(-68)" font-size="26">宽度</text>
          <text x="296" y="552" font-size="42">环式承台</text>
        </g>
        <path d="M285 572H470" stroke="#fff" stroke-width="5"/>
      </svg>
    </div>
  </div>

  <!-- annotation drawn over the screenshot -->
  <div class="absolute left-[278px] top-[126px] w-[94px] h-[106px] border border-[#d0242c]"></div>

  <!-- rebar display panel -->
  <div class="absolute left-0 top-[258px] w-[152px] h-[172px] flex flex-col border-r-[3px] border-b-[5px] border-[#7f92dc]">
    <div class="h-[22px] shrink-0 flex items-center bg-linear-to-b from-[#8298e0] to-[#7487d4] pl-[2px] font-bold text-[#c5d4f8]">钢筋显示控制面板</div>
    <div class="flex-1 bg-white pt-[3px] pl-[7px] border-t border-[#445]">
      <label class="flex items-center h-[12px] gap-[5px]"><span class="w-[10px] h-[10px] border border-[#8a8a80] bg-[#f2f2e8] flex items-center justify-center"><svg class="w-[8px] h-[8px]" viewBox="0 0 8 8"><path d="M1 4l2 2 4-5" fill="none" stroke="#2c9c3c" stroke-width="2"/></svg></span>横向受力筋</label>
      <label class="flex items-center h-[12px] gap-[5px]"><span class="w-[10px] h-[10px] border border-[#8a8a80] bg-[#f2f2e8] flex items-center justify-center"><svg class="w-[8px] h-[8px]" viewBox="0 0 8 8"><path d="M1 4l2 2 4-5" fill="none" stroke="#2c9c3c" stroke-width="2"/></svg></span>纵向受力筋</label>
      <label class="flex items-center h-[12px] gap-[5px]"><span class="w-[10px] h-[10px] border border-[#8a8a80] bg-[#f2f2e8] flex items-center justify-center"><svg class="w-[8px] h-[8px]" viewBox="0 0 8 8"><path d="M1 4l2 2 4-5" fill="none" stroke="#2c9c3c" stroke-width="2"/></svg></span>显示其它图元</label>
      <label class="flex items-center h-[12px] gap-[5px]"><span class="w-[10px] h-[10px] border border-[#8a8a80] bg-[#f2f2e8] flex items-center justify-center"><svg class="w-[8px] h-[8px]" viewBox="0 0 8 8"><path d="M1 4l2 2 4-5" fill="none" stroke="#2c9c3c" stroke-width="2"/></svg></span>显示详细公式</label>
    </div>
  </div>
</div>

<script>
  // rebar cage wireframe
  const A = [551, 355], B = [862, 315], C = [932, 157], D = [621, 198];
  const drop = [13, 48];
  const lerp = (p, q, t) => [p[0] + (q[0] - p[0]) * t, p[1] + (q[1] - p[1]) * t];
  const down = (p, t) => [p[0] + drop[0] * t, p[1] + drop[1] * t];
  const seg = (p, q) => "M" + p[0].toFixed(1) + " " + p[1].toFixed(1) + "L" + q[0].toFixed(1) + " " + q[1].toFixed(1);

  let rows = "", cols = "";
  for (let i = 0; i <= 21; i++) rows += seg(lerp(A, D, i / 21), lerp(B, C, i / 21));
  for (let j = 0; j <= 26; j++) cols += seg(lerp(A, B, j / 26), lerp(D, C, j / 26));
  document.getElementById("cageRows").setAttribute("d", rows);
  document.getElementById("cageCols").setAttribute("d", cols);

  function face(p, q, n) {
    let d = "";
    for (let k = 1; k <= 4; k++) d += seg(down(p, k / 4), down(q, k / 4));
    for (let i = 0; i < n; i++) {
      const a = lerp(p, q, i / n), m = lerp(p, q, (i + .5) / n), b = lerp(p, q, (i + 1) / n);
      d += seg(a, down(m, 1)) + seg(down(m, 1), b);
      if (i % 4 == 0) d += seg(a, down(a, 1));
    }
    return d;
  }
  document.getElementById("cageMesh").setAttribute("d", face(A, B, 34) + face(B, C, 24) + face(A, D, 24) + face(D, C, 34));
</script>
</body>
</html>
